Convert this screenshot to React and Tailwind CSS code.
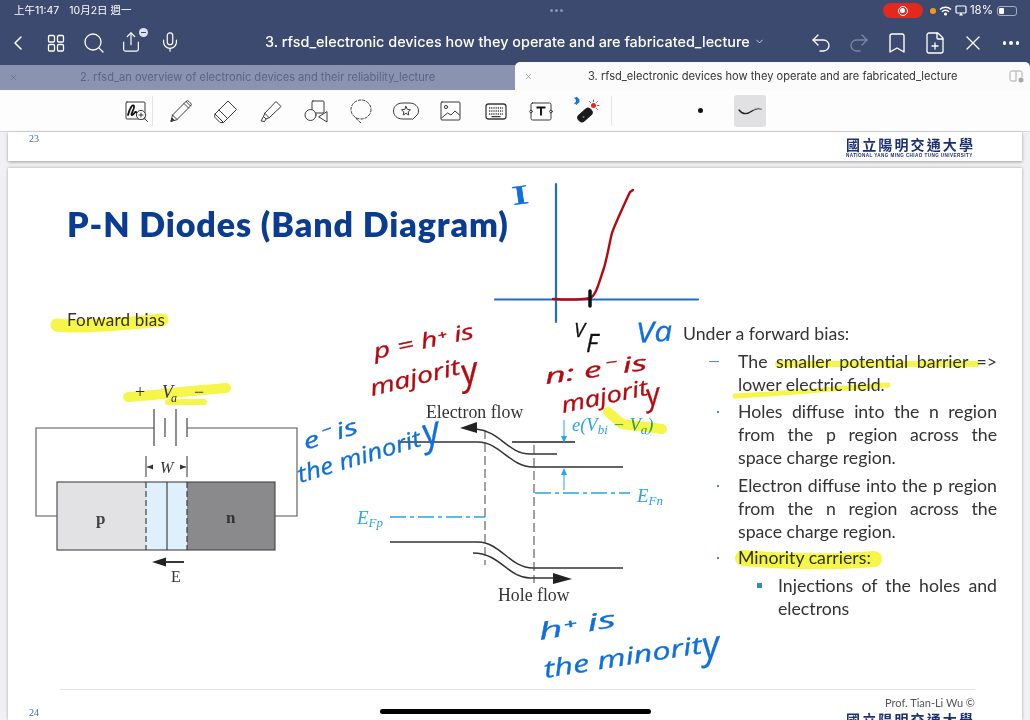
import React from "react";
import {
  Bookmark,
  ChevronDown,
  ChevronLeft,
  FilePlus,
  Mic,
  Redo2,
  Search,
  Share,
  Undo2,
  X,
} from "lucide-react";

const uiFont = "font-['Inter','Noto_Sans_CJK_TC',sans-serif]";
const slideFont = "font-['Lato','Noto_Sans',sans-serif]";

function ToolIcon({ children }) {
  return (
    <div className="w-[45px] h-[42px] flex items-center justify-center shrink-0">
      <svg width="30" height="30" viewBox="0 0 30 30" fill="none" stroke="#3a3a3a" strokeWidth="1" strokeLinejoin="round" strokeLinecap="round">
        {children}
      </svg>
    </div>
  );
}

function Toolbar() {
  return (
    <div className="h-[42px] bg-[#fdfdfd] border-b border-[#d9d9dc] flex items-center pl-[113px] shrink-0">
      <ToolIcon>
        <rect x="5" y="6" width="19" height="17" rx="1" />
        <path d="M7 19c2-8 5-11 6-9s-4 9-2 9 3-4 4-3 1 2 2 1" strokeWidth="1.800" stroke="#111" />
        <circle cx="20" cy="19" r="4.600" fill="#fdfdfd" />
        <path d="M20 17v4M18 19h4M23.500 22.500l3 3" />
      </ToolIcon>
      <div className="w-px h-[30px] bg-[#e6e6e8] -ml-[6px] mr-[5px]" />
      <ToolIcon>
        <path d="M5 25l1.500-6L20 5.500a2 2 0 0 1 3 0l1.500 1.500a2 2 0 0 1 0 3L11 23.500z" />
        <path d="M6.500 19l4.500 4.500M18 7.500l4.500 4.500M20 5.500l4.500 4.500" />
        <path d="M5 25l1-3 2 2z" fill="#333" />
      </ToolIcon>
      <ToolIcon>
        <path d="M4 18L17 5l8.500 8.500-13 13H9l-5-5z" />
        <path d="M4 18l8.500 8.500M8 14l8.500 8.500" />
      </ToolIcon>
      <ToolIcon>
        <path d="M9 17L20 5.500l5 5L13.500 21.500z" />
        <path d="M9 17l-1.500 3.500 2.500 2.500 3.500-1.500M7.500 20.500L5 25l3.500.5 1.500-2.500" />
      </ToolIcon>
      <ToolIcon>
        <rect x="11" y="5" width="12" height="12" rx="1" />
        <circle cx="9.500" cy="19" r="5.500" fill="#fdfdfd" />
        <path d="M26 16v10l-8-5z" fill="#fdfdfd" />
      </ToolIcon>
      <ToolIcon>
        <ellipse cx="15" cy="13.500" rx="10" ry="9.500" strokeDasharray="2.500 1.800" />
        <path d="M10 22c1 2 3 3 5 5" strokeDasharray="2.500 1.800" />
      </ToolIcon>
      <ToolIcon>
        <path d="M20 23h-8C6 23 2.500 19.500 2.500 15S6 7 12 7h6c6 0 9.500 3.500 9.500 8 0 1.500-.5 3-1.500 4l-4 4z" />
        <path d="M15 10.500l1.400 2.900 3.100.4-2.300 2.100.6 3.100-2.800-1.600-2.800 1.600.6-3.100-2.300-2.100 3.100-.4z" />
      </ToolIcon>
      <ToolIcon>
        <rect x="5" y="6" width="19" height="18" rx="1" />
        <circle cx="10" cy="11" r="1.600" />
        <path d="M5.500 22l6-5 3.500 2 4-4 4.500 4" />
      </ToolIcon>
      <ToolIcon>
        <rect x="5" y="8" width="20" height="15" rx="2.500" strokeWidth="1.300" />
        <path d="M8 12h14M8 15h14M8 18h14" strokeDasharray="1.200 1" strokeLinecap="butt" strokeWidth="1.500" />
        <path d="M11 20.700h8" strokeWidth="1.300" />
      </ToolIcon>
      <ToolIcon>
        <rect x="5" y="7" width="20" height="17" rx="1.500" />
        <circle cx="5" cy="15.500" r="1.300" fill="#fdfdfd" />
        <circle cx="25" cy="15.500" r="1.300" fill="#fdfdfd" />
        <path d="M10.500 11.500h9M15 11.500v8" strokeWidth="1.900" stroke="#111" strokeLinecap="butt" />
      </ToolIcon>
      <ToolIcon>
        <path d="M7 2l4 3.500-2.500 2.500V1.500l2.500 2.500-4 3.500" stroke="#1473e6" strokeWidth="1.300" transform="translate(-3 0)" />
        <rect x="6" y="15" width="16" height="8" rx="3.500" fill="#1b1b1d" stroke="#1b1b1d" transform="rotate(-42 14 19)" />
        <circle cx="12.500" cy="21" r="1" fill="#777" stroke="none" />
        <circle cx="22.500" cy="9.500" r="2.500" fill="#e6281f" stroke="none" />
        <path d="M22.500 4v1.500M28 9.500h-1.500M26.500 5.500l-1 1M26.500 13.500l-1-1M18.500 5.500l1 1" stroke="#e6281f" strokeWidth="0.900" />
      </ToolIcon>
      <div className="w-px h-[30px] bg-[#e6e6e8] ml-[3px]" />
      <div className="w-[5px] h-[5px] rounded-full bg-[#111] ml-[86px]" />
      <div className="w-[32px] h-[32px] rounded-[3px] bg-[#e1e1e3] ml-[31px] flex items-center justify-center">
        <svg width="26" height="12" viewBox="0 0 26 12" fill="none">
          <path d="M2 5c4 5 9 4 13 1 3-2 6-3 9-2" stroke="#222" strokeWidth="1.300" strokeLinecap="round" />
          <path d="M16 5c3-2 5-2.500 8-1.500" stroke="#bbb" strokeWidth="1" />
        </svg>
      </div>
    </div>
  );
}

function Logo() {
  return (
    <div className="w-[127px] text-[#1b2f73] leading-none">
      <div className="text-[14px] font-bold flex justify-between font-['Noto_Sans_CJK_TC',sans-serif]">
        {"國立陽明交通大學".split("").map((c, i) => (
          <span key={i}>{c}</span>
        ))}
      </div>
      <div className="text-[4.600px] font-bold mt-[3px] whitespace-nowrap font-['Liberation_Sans',sans-serif] tracking-[0.420px]">
        NATIONAL YANG MING CHIAO TUNG UNIVERSITY
      </div>
    </div>
  );
}

function CircuitFigure() {
  return (
    <svg width="280" height="215" viewBox="30 380 280 215" className="ml-[22px] mt-[50px] block" fontFamily="'Liberation Serif', serif" fill="#333">
      <rect x="57" y="482" width="89" height="68" fill="#e2e1e3" />
      <rect x="146" y="482" width="41" height="68" fill="#def0fb" />
      <rect x="187" y="482" width="88" height="68" fill="#8a8a8c" />
      <rect x="57" y="482" width="218" height="68" fill="none" stroke="#444" strokeWidth="1.100" />
      <path d="M167 482v68" stroke="#333" strokeWidth="1.100" />
      <path d="M146 482v68M187 482v68" stroke="#333" strokeWidth="1.100" strokeDasharray="6 3" />
      <path d="M57 516H36V428H154M187 428H297V516H275" fill="none" stroke="#555" strokeWidth="1.100" />
      <path d="M154 409v37M176 409v37M165 418v19M187 418v19" stroke="#555" strokeWidth="1.300" />
      <path d="M146 456v21M187 456v21" stroke="#333" strokeWidth="1" />
      <path d="M147 467h6M186 467h-6" stroke="#333" strokeWidth="1" />
      <path d="M147 467l6-2.500v5zM186 467l-6-2.500v5z" />
      <text x="160" y="473" fontSize="16" fontStyle="italic">W</text>
      <text x="96" y="524" fontSize="17" fontWeight="bold" fill="#444">p</text>
      <text x="226" y="523" fontSize="17" fontWeight="bold" fill="#333">n</text>
      <path d="M184 562h-20" stroke="#222" strokeWidth="1.800" />
      <path d="M152 562l14-4.500v9z" fill="#222" />
      <text x="171" y="582" fontSize="16">E</text>
      <text x="135" y="398" fontSize="18">+</text>
      <text x="162" y="398" fontSize="18" fontStyle="italic">V</text>
      <text x="171" y="402" fontSize="12" fontStyle="italic">a</text>
      <text x="194" y="398" fontSize="18">−</text>
    </svg>
  );
}

function BandFigure() {
  const blue = "#29a7df";
  return (
    <svg width="325" height="215" viewBox="350 395 325 215" className="mt-[85px] block shrink-0" fontFamily="'Liberation Serif', serif" fill="none">
      <path d="M400 442H478C500 442 510 467 533 467H623" stroke="#333" strokeWidth="1.500" />
      <path d="M512 442H575" stroke="#222" strokeWidth="1.500" />
      <path d="M476 429C500 431 508 454 530 454H557" stroke="#333" strokeWidth="1.500" />
      <path d="M460 428l17-6v11z" fill="#222" />
      <path d="M390 542H478C500 542 510 568 533 568H623" stroke="#333" strokeWidth="1.500" />
      <path d="M473 553C500 553 508 578 530 578H556" stroke="#333" strokeWidth="1.500" />
      <path d="M572 579l-19-6v11z" fill="#222" />
      <path d="M485 430V565M534 445V583" stroke="#444" strokeWidth="1" strokeDasharray="9 4" />
      <path d="M535 493H630" stroke={blue} strokeWidth="1.500" strokeDasharray="16 4 4 4" />
      <path d="M390 517H485" stroke={blue} strokeWidth="1.500" strokeDasharray="16 4 4 4" />
      <path d="M564 420V440M564 490V471" stroke={blue} strokeWidth="1" />
      <path d="M564 443l-3-7h6zM564 468l-3 7h6z" fill={blue} />
      <text x="426" y="418" fontSize="17.800" fill="#333">Electron flow</text>
      <text x="498" y="601" fontSize="17.800" fill="#333">Hole flow</text>
      <text x="572" y="431" fontSize="18.500" fill={blue} fontStyle="italic">e(V<tspan fontSize="13" dy="3">bi</tspan><tspan dy="-3"> − V</tspan><tspan fontSize="13" dy="3">a</tspan><tspan dy="-3">)</tspan></text>
      <text x="637" y="502" fontSize="19" fill={blue} fontStyle="italic">E<tspan fontSize="13" dy="3">Fn</tspan></text>
      <text x="357" y="524" fontSize="19" fill={blue} fontStyle="italic">E<tspan fontSize="13" dy="3">Fp</tspan></text>
    </svg>
  );
}

function Bullet({ marker, children, className }) {
  return (
    <div className={`flex ${className}`}>
      <div className="w-[55px] shrink-0 pl-[26px] h-[23px] flex items-center">{marker}</div>
      <p className="flex-1 text-justify">{children}</p>
    </div>
  );
}

const dot = <span className="w-[2px] h-[2px] bg-[#4a8fb5] ml-[8px]" />;

function NotesColumn() {
  return (
    <div className="w-[322px] pl-[8px] pt-[12px] text-[17.700px] leading-[23px] text-[#333] shrink-0">
      <p>Under a forward bias:</p>
      <Bullet className="mt-[5px]" marker={<span className="w-[10px] h-px bg-[#4a8fb5]" />}>
        The smaller potential barrier =&gt; lower electric field.
      </Bullet>
      <Bullet className="mt-[4px]" marker={dot}>
        Holes diffuse into the n region from the p region across the space charge region.
      </Bullet>
      <Bullet className="mt-[5px]" marker={dot}>
        Electron diffuse into the p region from the n region across the space charge region.
      </Bullet>
      <Bullet className="mt-[3px]" marker={dot}>
        Minority carriers:
      </Bullet>
      <div className="flex mt-[5px]">
        <div className="w-[95px] shrink-0 pl-[74px] h-[23px] flex items-center">
          <span className="w-[5px] h-[5px] bg-[#2f8fb8]" />
        </div>
        <p className="flex-1 text-justify">Injections of the holes and electrons</p>
      </div>
    </div>
  );
}

function Hand({ x, y, a, size = 21, color, len, children }) {
  return (
    <text
      x={x}
      y={y}
      transform={`rotate(${a} ${x} ${y})`}
      fontSize={size}
      fill={color}
      stroke={color}
      strokeWidth="0.300"
      fontStyle="italic"
      fontFamily="'Open Sans', sans-serif"
      textLength={len}
      lengthAdjust="spacingAndGlyphs"
    >
      {children}
    </text>
  );
}

// pen annotations sit on top of the whole page, so coordinates are page pixels
function InkLayer() {
  const red = "#b5090f";
  const blue = "#0f6fdc";
  return (
    <svg width="1030" height="720" viewBox="0 0 1030 720" fill="none" strokeLinecap="round" strokeLinejoin="round" className="absolute inset-0 pointer-events-none">
      <g stroke="#f6f64a" className="mix-blend-multiply">
        <path d="M57 325C80 328 120 324 162 320" strokeWidth="13" />
        <path d="M128 397C150 396 185 391 226 388" strokeWidth="10" />
        <path d="M168 402L204 402" strokeWidth="6" />
        <path d="M778 364H976" strokeWidth="6" />
        <path d="M735 396C780 394 840 388 888 385" strokeWidth="5" />
        <path d="M743 558C790 562 840 562 874 559" strokeWidth="16" />
        <path d="M608 412L622 424L662 429" strokeWidth="10" />
      </g>
      <path d="M556 184V322M495 299.500H698" stroke="#1a6fd4" strokeWidth="2.200" />
      <path d="M553 299C570 300 585 299 590 298C596 296 599 282 604 268C608 254 610 240 612 233C616 222 624 205 630 192L633 190" stroke={red} strokeWidth="2.400" />
      <path d="M590 291V306" stroke="#111" strokeWidth="3.500" />

      <text x="513" y="205" fontSize="27" fill={blue} stroke={blue} strokeWidth="0.500" fontFamily="'Liberation Serif', serif" textLength="17" lengthAdjust="spacingAndGlyphs" transform="rotate(-8 513 205)">I</text>
      <Hand x={574} y={337} a={0} size={20} color="#111" len={11}>V</Hand>
      <Hand x={586} y={352} a={0} size={25} color="#111">F</Hand>
      <Hand x={637} y={343} a={-4} size={28} color={blue} len={36}>Va</Hand>

      <Hand x={375} y={359} a={-12} size={21} color={red} len={102}>p = h⁺ is</Hand>
      <Hand x={372} y={396} a={-14} size={22} color={red} len={92}>majorit</Hand>
      <Hand x={464} y={385} a={-14} size={36} color={red}>y</Hand>
      <Hand x={546} y={384} a={-8} size={21} color={red} len={103}>n: e⁻ is</Hand>
      <Hand x={563} y={413} a={-12} size={22} color={red} len={88}>majorit</Hand>
      <Hand x={648} y={406} a={-12} size={30} color={red}>y</Hand>

      <Hand x={306} y={450} a={-18} size={22} color={blue} len={56}>e⁻ is</Hand>
      <Hand x={300} y={483} a={-17} size={23} color={blue} len={128}>the minorit</Hand>
      <Hand x={426} y={446} a={-17} size={38} color={blue}>y</Hand>
      <Hand x={540} y={640} a={-10} size={23} color={blue} len={78}>h⁺ is</Hand>
      <Hand x={545} y={678} a={-9} size={24} color={blue} len={160}>the minorit</Hand>
      <Hand x={704} y={659} a={-9} size={38} color={blue}>y</Hand>
    </svg>
  );
}

export default function App() {
  return (
    <div className={`relative w-[1030px] h-[720px] overflow-hidden flex flex-col bg-[#f1f1f3] ${uiFont}`}>
      {/* status bar */}
      <div className="h-[21px] bg-[#3d4a70] flex items-center text-white text-[10.500px] pl-[14px] pr-[13px] shrink-0">
        <span>上午11:47</span>
        <span className="ml-[10px]">10月2日 週一</span>
        <div className="ml-[418px] flex gap-[2px]">
          <span className="w-[3px] h-[3px] rounded-full bg-[#8a94b0]" />
          <span className="w-[3px] h-[3px] rounded-full bg-[#8a94b0]" />
          <span className="w-[3px] h-[3px] rounded-full bg-[#8a94b0]" />
        </div>
        <div className="ml-auto w-[40px] h-[15px] rounded-full bg-[#e3281e] flex items-center justify-center">
          <span className="w-[10px] h-[10px] rounded-full border border-white flex items-center justify-center">
            <span className="w-[5px] h-[5px] rounded-full bg-white" />
          </span>
        </div>
        <span className="ml-[7px] w-[6px] h-[6px] rounded-full bg-[#f39a1e]" />
        <svg className="ml-[3px]" width="13" height="10" viewBox="0 0 13 10" fill="none" stroke="white" strokeWidth="1.500">
          <path d="M1 3.500c3-3 8-3 11 0M3 5.700c2-1.800 5-1.800 7 0" />
          <circle cx="6.500" cy="8" r="0.800" fill="white" />
        </svg>
        <svg className="ml-[3px]" width="12" height="11" viewBox="0 0 12 11" fill="none" stroke="white" strokeWidth="1.200">
          <rect x="1" y="1" width="10" height="7" rx="1" />
          <path d="M4 10.500h4l-2-3z" fill="white" stroke="none" />
        </svg>
        <span className="ml-[3px] text-[11.500px]">18%</span>
        <div className="ml-[4px] w-[20px] h-[10px] rounded-[3px] border border-[#a6aec4] p-px">
          <div className="w-[5px] h-full bg-white rounded-[1px]" />
        </div>
      </div>

      {/* nav bar */}
      <div className="h-[44px] bg-[#3d4a70] flex items-center text-white pl-[6px] pr-[7px] shrink-0">
        <div className="flex gap-[14px] shrink-0 w-[176px]">
          <ChevronLeft size={24} strokeWidth={1.500} />
          <svg width="24" height="24" viewBox="0 0 24 24" fill="none" stroke="white" strokeWidth="1.300">
            <rect x="4.500" y="4.500" width="6" height="6.500" rx="1.200" />
            <rect x="13.500" y="4.500" width="6" height="6.500" rx="1.200" />
            <rect x="4.500" y="13.500" width="6" height="6.500" rx="1.200" />
            <rect x="13.500" y="13.500" width="6" height="6.500" rx="1.200" />
          </svg>
          <Search size={24} strokeWidth={1.300} />
          <div className="relative w-[24px] h-[24px]">
            <Share size={22} strokeWidth={1.300} />
            <span className="absolute -top-[3px] right-[-4px] w-[9px] h-[9px] rounded-full bg-[#dfe3ee] flex items-center justify-center">
              <span className="w-[5px] h-px bg-[#3d4a70]" />
            </span>
          </div>
          <Mic size={22} strokeWidth={1.300} className="ml-[1px]" />
        </div>
        <div className="flex-1 flex items-center pl-[83px] text-[14.400px] font-medium whitespace-nowrap -mt-[2px]">
          <span>3. rfsd_electronic devices how they operate and are fabricated_lecture</span>
          <ChevronDown size={11} strokeWidth={2} className="ml-[4px] text-[#d5d9e5]" />
        </div>
        <div className="flex gap-[14px] shrink-0 items-center">
          <Undo2 size={24} strokeWidth={1.300} />
          <Redo2 size={24} strokeWidth={1.300} className="text-[#7c87a5]" />
          <Bookmark size={24} strokeWidth={1.400} />
          <FilePlus size={24} strokeWidth={1.300} />
          <X size={24} strokeWidth={1.300} />
          <div className="w-[24px] flex gap-[3px] justify-center">
            <span className="w-[3.500px] h-[3.500px] rounded-full bg-white" />
            <span className="w-[3.500px] h-[3.500px] rounded-full bg-white" />
            <span className="w-[3.500px] h-[3.500px] rounded-full bg-white" />
          </div>
        </div>
      </div>

      {/* tabs */}
      <div className="h-[25px] flex shrink-0 text-[11.100px] bg-[#8a94b0] relative">
        <div className="w-[515px] flex items-center pl-[9px] text-[#5a6584]">
          <X size={9} strokeWidth={1.500} />
          <span className="ml-[62px]">2. rfsd_an overview of electronic devices and their reliability_lecture</span>
        </div>
        <div className="w-[515px] h-[28px] -mt-[3px] bg-[#fbfbfc] rounded-t-[5px] flex items-center pl-[9px] text-[#333]">
          <X size={9} strokeWidth={1.500} className="text-[#777]" />
          <span className="ml-[55px]">3. rfsd_electronic devices how they operate and are fabricated_lecture</span>
          <svg className="ml-auto mr-[6px]" width="15" height="14" viewBox="0 0 15 14" fill="none" stroke="#a9a9ad" strokeWidth="1">
            <path d="M7 2H2.500A1.500 1.500 0 0 0 1 3.500v7A1.500 1.500 0 0 0 2.500 12H7zM7 2h4.500A1.500 1.500 0 0 1 13 3.500V8" />
            <circle cx="12" cy="11" r="2.500" fill="#a9a9ad" stroke="none" />
          </svg>
        </div>
      </div>

      <Toolbar />

      {/* previous page, only its bottom shows */}
      <div className="h-[29px] mx-[8px] bg-white shadow-[0_1px_3px_rgba(0,0,0,0.35)] flex justify-between pl-[21px] pr-[49px] shrink-0">
        <span className="text-[10px] leading-none mt-[2px] text-[#4a6aa0] font-['Liberation_Serif',serif]">23</span>
        <div className="mt-[5px]">
          <Logo />
        </div>
      </div>

      {/* current page */}
      <div className={`mx-[8px] mt-[7px] flex-1 min-h-0 bg-white shadow-[0_0_3px_rgba(0,0,0,0.3)] overflow-hidden ${slideFont}`}>
        <div className="h-[521px] pt-[34px]">
          <h1 className="ml-[59px] text-[34px] leading-[44px] font-extrabold tracking-[0.900px] text-[#0a3d91] whitespace-nowrap">
            P-N Diodes (Band Diagram)
          </h1>
          <div className="mt-[64px] flex items-start">
            <div className="w-[342px] shrink-0">
              <p className="pl-[59px] text-[17px] tracking-[0.200px] leading-[20px] text-[#333]">Forward bias</p>
              <CircuitFigure />
            </div>
            <BandFigure />
            <NotesColumn />
          </div>
        </div>
        <div className="ml-[52px] mr-[47px] border-t border-[#e6e6e6]" />
        <div className="flex justify-between items-start pl-[21px] pr-[49px]">
          <span className="mt-[18px] text-[10px] leading-none text-[#4a6aa0] font-['Liberation_Serif',serif]">24</span>
          <div className="flex flex-col items-end mt-[6px]">
            <span className="text-[11px] leading-[14px] text-[#555] -mr-[2px]">Prof. Tian-Li Wu ©</span>
            <div className="mt-[2px]">
              <Logo />
            </div>
          </div>
        </div>
      </div>

      <InkLayer />
      {/* home indicator */}
      <div className="absolute left-[380px] bottom-[6px] w-[271px] h-[5px] rounded-full bg-black" />
    </div>
  );
}
